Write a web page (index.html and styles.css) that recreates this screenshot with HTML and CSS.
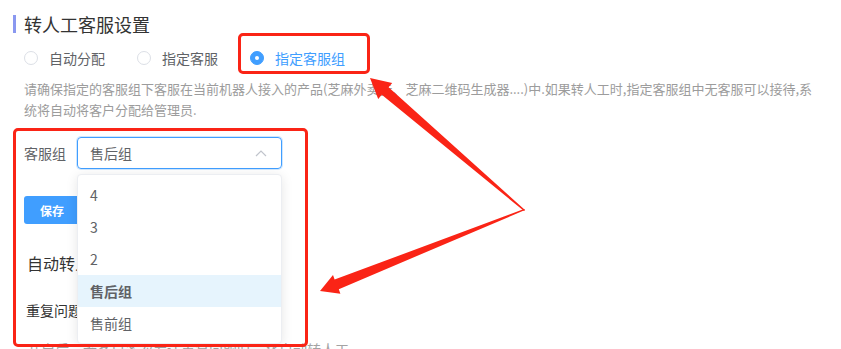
FILE: index.html
```html
<!DOCTYPE html>
<html lang="zh-CN">
<head>
  <meta charset="UTF-8">
  <title>转人工客服设置</title>
  <link rel="stylesheet" href="styles.css">
</head>
<body>
  <div class="page">
    <div class="title">转人工客服设置</div>
    <div class="content">
      <div class="radios">
        <label class="radio"><span class="dot"></span>自动分配</label>
        <label class="radio"><span class="dot"></span>指定客服</label>
        <label class="radio checked"><span class="dot"></span>指定客服组</label>
      </div>
      <div class="desc">请确保指定的客服组下客服在当前机器人接入的产品(芝麻外卖券、芝麻二维码生成器....)中.如果转人工时,指定客服组中无客服可以接待,系统将自动将客户分配给管理员.</div>
      <div class="form-row">
        <span class="label">客服组</span>
        <div class="select">
          <div class="select-input">
            <span>售后组</span>
            <svg class="chevron" width="12" height="8" viewBox="0 0 12 8"><path d="M1 7 L6 2 L11 7" fill="none" stroke="#c0c4cc" stroke-width="1.2"/></svg>
          </div>
          <ul class="dropdown">
            <li>4</li>
            <li>3</li>
            <li>2</li>
            <li class="selected">售后组</li>
            <li>售前组</li>
          </ul>
        </div>
      </div>
      <button class="btn">保存</button>
      <div class="sub-title">自动转人工设置</div>
      <div class="item-title">重复问题转人工</div>
      <div class="item-desc">开启后，若客户多次发送重复问题时，将自动转人工</div>
    </div>
  </div>

  <div class="mark mark-radio"></div>
  <div class="mark mark-select"></div>
  <svg class="arrows" width="841" height="349" viewBox="0 0 841 349">
    <polygon points="525,210 388.6,87.2 392.2,83 370,78 378.2,99 381.8,94.8 524,211" fill="#fa2416"/>
    <polygon points="525,210 338.8,289.2 340.4,293.7 320,291 333,275.1 334.6,279.6 524,209" fill="#fa2416"/>
  </svg>
</body>
</html>
```

FILE: styles.css
```css
html, body {
  margin: 0;
  overflow: hidden;
  background: #fff;
}
body {
  font-family: "Noto Sans CJK SC", "Noto Sans", sans-serif;
  color: #333;
  position: relative;
  width: 841px;
  height: 349px;
}
.page {
  padding: 15px 0 0 13px;
}
.title {
  border-left: 3px solid #8a98f0;
  padding-left: 8px;
  font-size: 18px;
  line-height: 18px;
  color: #333;
}
.content {
  padding-left: 11px;
}
.radios {
  display: flex;
  align-items: center;
  height: 20px;
  margin-top: 15px;
}
.radio {
  display: flex;
  align-items: center;
  font-size: 14px;
  color: #606266;
  margin-right: 32px;
}
.radio .dot {
  width: 12px;
  height: 12px;
  border: 1px solid #dcdfe6;
  border-radius: 50%;
  margin-right: 11px;
  box-sizing: content-box;
  position: relative;
}
.radio.checked {
  color: #409eff;
}
.radio.checked .dot {
  background: #409eff;
  border-color: #409eff;
}
.radio.checked .dot::after {
  content: "";
  position: absolute;
  left: 4px;
  top: 4px;
  width: 4px;
  height: 4px;
  border-radius: 50%;
  background: #fff;
}
.desc {
  margin-top: 10px;
  font-size: 13px;
  line-height: 21px;
  color: #9c9c9c;
  padding-right: 22px;
}
.form-row {
  display: flex;
  align-items: center;
  margin-top: 17px;
}
.label {
  font-size: 14px;
  color: #606266;
  width: 53px;
}
.select {
  position: relative;
  width: 205px;
}
.select-input {
  height: 32px;
  box-sizing: border-box;
  border: 1px solid #409eff;
  border-radius: 4px;
  box-shadow: 0 0 0 1px rgba(64,158,255,0.25);
  display: flex;
  align-items: center;
  justify-content: space-between;
  padding: 0 14px 0 12px;
  font-size: 14px;
  color: #606266;
}
.dropdown {
  position: absolute;
  top: 37px;
  left: 0;
  width: 205px;
  margin: 0;
  padding: 4px 0;
  list-style: none;
  background: #fff;
  border: 1px solid #eceef2;
  border-radius: 4px;
  box-shadow: 0 2px 12px rgba(0,0,0,0.1);
  box-sizing: border-box;
  z-index: 5;
}
.dropdown li {
  height: 32px;
  line-height: 32px;
  padding-left: 12px;
  font-size: 14px;
  color: #606266;
}
.dropdown li.selected {
  background: #e6f4fd;
  font-weight: bold;
}
.btn {
  display: block;
  margin-top: 27px;
  height: 28px;
  padding: 0 16px;
  border: none;
  border-radius: 3px;
  background: #409eff;
  color: #fff;
  font-family: inherit;
  font-size: 12px;
  font-weight: bold;
}
.sub-title {
  margin-top: 27px;
  padding-left: 3px;
  font-size: 16px;
  line-height: 24px;
  color: #333;
}
.item-title {
  margin-top: 25px;
  padding-left: 2px;
  font-size: 14px;
  line-height: 20px;
  color: #333;
}
.item-desc {
  margin-top: 19px;
  padding-left: 3px;
  font-size: 14px;
  line-height: 20px;
  color: #a3a3a3;
}
.mark {
  position: absolute;
  border: 3px solid #fa2416;
  border-radius: 5px;
  z-index: 8;
}
.mark-radio {
  left: 238px;
  top: 33px;
  width: 126px;
  height: 35px;
}
.mark-select {
  left: 13px;
  top: 128px;
  width: 289px;
  height: 213px;
}
.arrows {
  position: absolute;
  left: 0;
  top: 0;
  z-index: 9;
}
```
